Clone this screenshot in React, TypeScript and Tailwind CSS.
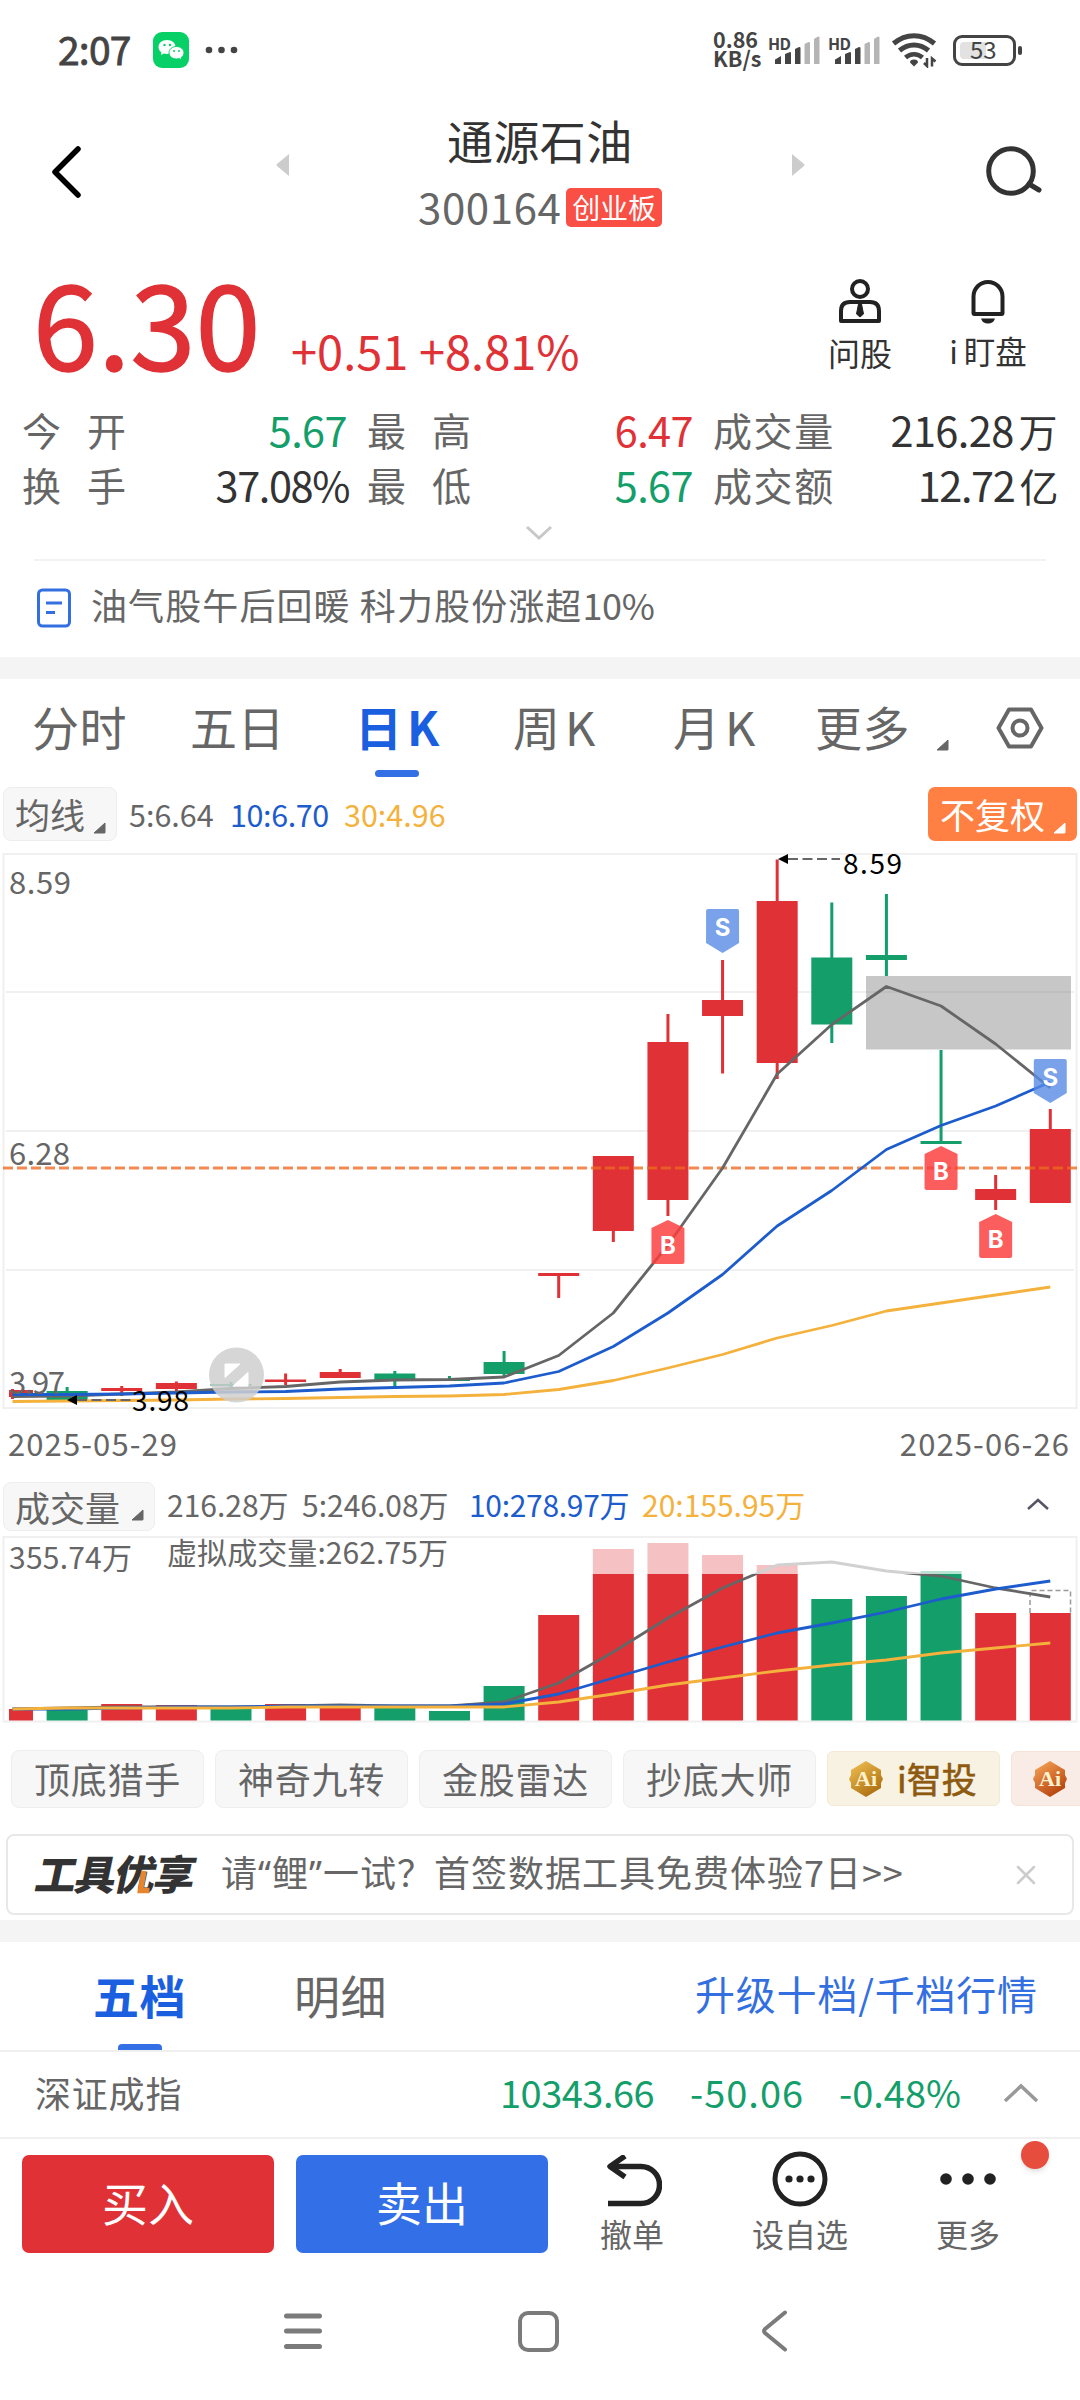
import { ReactNode } from 'react';
import clsx from 'clsx';

type Candle = {
  color: 'red' | 'green';
  high: number;
  top: number;
  bottom: number;
  low: number;
};

const COLORS = { red: '#df3136', green: '#139e6a' };
const SLOT = 54.62;
const BAR_WIDTH = 41;

const centerX = (index: number) => 12.5 + index * SLOT;

// y values are relative to the price pane
const CANDLES: Candle[] = [
  { color: 'red', high: 539, top: 540, bottom: 547, low: 549 },
  { color: 'green', high: 537, top: 541, bottom: 550, low: 550 },
  { color: 'red', high: 536, top: 538, bottom: 541, low: 546 },
  { color: 'red', high: 531.5, top: 533, bottom: 539, low: 541 },
  { color: 'green', high: 532, top: 534, bottom: 536, low: 538 },
  { color: 'red', high: 523.5, top: 529.5, bottom: 532, low: 535 },
  { color: 'red', high: 519, top: 522, bottom: 528, low: 528 },
  { color: 'green', high: 521, top: 523.5, bottom: 530, low: 536 },
  { color: 'green', high: 526, top: 529, bottom: 531, low: 531 },
  { color: 'green', high: 501, top: 512, bottom: 524, low: 526 },
  { color: 'red', high: 423, top: 423, bottom: 426, low: 448 },
  { color: 'red', high: 306, top: 306, bottom: 381, low: 392 },
  { color: 'red', high: 164, top: 192, bottom: 350, low: 366 },
  { color: 'red', high: 110, top: 150, bottom: 166, low: 223.5 },
  { color: 'red', high: 9.5, top: 51, bottom: 213, low: 229 },
  { color: 'green', high: 52.5, top: 107.5, bottom: 174.5, low: 193 },
  { color: 'green', high: 44, top: 105, bottom: 110, low: 126 },
  { color: 'green', high: 200, top: 291, bottom: 294, low: 294 },
  { color: 'red', high: 325, top: 339, bottom: 350, low: 360 },
  { color: 'red', high: 259, top: 279, bottom: 353, low: 353 },
];

const MA5 = [546.5, 546, 544, 542, 538.5, 536.5, 532, 530, 529.5, 527, 505.5, 463, 395, 318, 224, 174.5, 136.5, 156, 194, 238];
const MA10 = [544.5, 544.5, 544, 543, 542, 541.5, 539, 537.5, 536, 533, 521.5, 496.5, 463, 424.5, 376, 340.5, 299.5, 275.5, 256, 232];
const MA30 = [551.5, 551, 550.5, 550, 549, 548.5, 547.5, 546.5, 546, 544.5, 539.5, 530.5, 518, 504.5, 488, 475.5, 461, 453, 445, 437];

const VOLUMES: { top: number; color: 'red' | 'green' }[] = [
  { top: 173, color: 'red' },
  { top: 172, color: 'green' },
  { top: 168, color: 'red' },
  { top: 169, color: 'red' },
  { top: 172, color: 'green' },
  { top: 168, color: 'red' },
  { top: 172, color: 'red' },
  { top: 172, color: 'green' },
  { top: 175, color: 'green' },
  { top: 150, color: 'green' },
  { top: 79, color: 'red' },
  { top: 13, color: 'red' },
  { top: 7, color: 'red' },
  { top: 19, color: 'red' },
  { top: 29, color: 'red' },
  { top: 63, color: 'green' },
  { top: 60, color: 'green' },
  { top: 35, color: 'green' },
  { top: 77, color: 'red' },
  { top: 77, color: 'red' },
];
const VOL5 = [173, 172, 171, 171, 171, 170, 169, 170, 170, 166, 147, 116, 82, 52, 29, 26, 35, 40, 52, 61];
const VOL10 = [173, 173, 172, 171, 171, 170, 170, 170, 170, 168, 158, 142, 126, 111, 97, 87, 76, 63, 53, 45];
const VOL20 = [173, 172, 172, 172, 172, 171, 171, 171, 171, 171, 166, 158, 149, 142, 135, 129, 124, 117, 112, 107];

const toPoints = (values: number[]) => values.map((y, i) => `${centerX(i)},${y}`).join(' ');

const MaLines = ({ short, mid, long }: { short: number[]; mid: number[]; long: number[] }) => (
  <g fill="none" strokeWidth="2.8" strokeLinejoin="round">
    <polyline points={toPoints(short)} stroke="#666" />
    <polyline points={toPoints(mid)} stroke="#1d5ccc" />
    <polyline points={toPoints(long)} stroke="#f4b13c" />
  </g>
);

const TradeMark = ({ index, y, kind }: { index: number; y: number; kind: 'B' | 'S' }) => {
  const x = centerX(index);
  return (
    <g>
      {kind === 'S' ? (
        <path
          d={`M${x - 14.5} ${y}h29q2 0 2 2v32l-16.5 10l-16.5-10v-32q0-2 2-2z`}
          fill="#588be5"
          fillOpacity="0.8"
        />
      ) : (
        <path
          d={`M${x} ${y}l16.5 8v34q0 2-2 2h-29q-2 0-2-2v-34z`}
          fill="#fb3d3d"
          fillOpacity="0.83"
        />
      )}
      <text
        x={x}
        y={kind === 'S' ? y + 27 : y + 34}
        textAnchor="middle"
        fill="#fff"
        fontSize="24"
        fontWeight="700"
        className="font-['Inter',sans-serif]"
      >
        {kind}
      </text>
    </g>
  );
};

const Corner = ({ className }: { className?: string }) => (
  <svg viewBox="0 0 13 12" className={clsx('h-3 w-[13px] shrink-0', className)}>
    <path d="M12 1v9.500q0 .5-.5.5H1z" fill="currentColor" stroke="currentColor" />
  </svg>
);

const SignalBars = () => (
  <div className="relative h-8 w-[60px] shrink-0">
    <span className="absolute top-[-1px] left-[-1px] text-[16px] leading-5 font-bold tracking-[-0.5px]">HD</span>
    <svg viewBox="0 0 60 32" className="h-8 w-[60px]">
      <path d="M6 30v-4q0-1 1-1l5-3v8z" fill="#444" />
      <path d="M16 30v-10l5-2q1 0 1 1v11z" fill="#444" />
      <path d="M26 30V15l4-2q1.500 0 1.500 1v16z" fill="#444" />
      <path d="M35.500 30V10l4-2q1.500 0 1.500 1v21z" fill="#b5b5b5" />
      <path d="M45 30V5l4-2.500q1.500 0 1.500 1V30z" fill="#b5b5b5" />
    </svg>
  </div>
);

const StatusBar = () => (
  <div className="flex h-[100px] items-center pl-[58px] text-[#444]">
    <span className="-mt-[3px] w-[95px] text-[39px] leading-none tracking-[-0.8px] [-webkit-text-stroke:0.8px_#444]">2:07</span>
    <svg viewBox="0 0 36 36" className="h-9 w-9">
      <rect width="36" height="36" rx="9" fill="#07d067" />
      <path d="M14 8c-5 0-8.500 3.200-8.500 7 0 2.200 1 4 3 5.400L7.800 23l3-1.500c1 .3 2 .5 3.200.5 5 0 8.500-3 8.500-7s-3.500-7-8.500-7z" fill="#fff" />
      <path d="M23.500 14.500c-4.200 0-7.500 2.800-7.500 6.300s3.300 6.200 7.500 6.200c1 0 1.900-.1 2.700-.4l2.600 1.300-.7-2.300c1.800-1.200 2.900-2.900 2.900-4.800 0-3.500-3.300-6.300-7.500-6.300z" fill="#fff" stroke="#07d067" />
      <g fill="#07d067">
        <circle cx="11.500" cy="13" r="1.200" />
        <circle cx="17" cy="13" r="1.200" />
        <circle cx="21" cy="19" r="1" />
        <circle cx="26" cy="19" r="1" />
      </g>
    </svg>
    <svg viewBox="0 0 34 8" className="ml-4 h-2 w-[34px]" fill="#444">
      <circle cx="4" cy="4" r="3.300" />
      <circle cx="16.500" cy="4" r="3.300" />
      <circle cx="29" cy="4" r="3.300" />
    </svg>
    <div className="-mt-[3px] ml-[474px] w-[56px] text-[21.5px] leading-[18.5px] font-bold">
      <p>0.86</p>
      <p>KB/s</p>
    </div>
    <SignalBars />
    <SignalBars />
    <svg viewBox="0 0 48 36" className="ml-[2px] h-9 w-12" fill="none" stroke="#444" strokeWidth="5">
      <path d="M2.500 11.500C15 1 31 1 43.500 11.500" />
      <path d="M8.500 18.500c9-7.500 20-7.500 29 0" />
      <path d="M14.500 25.500c5-4.500 12-4.500 17 0" strokeWidth="4.500" />
      <path d="M23 34.500l-4-4q0-3 4-3t4 3z" fill="#444" stroke="none" />
      <path d="M36 26v8l-3-3M41 34.500v-8l3.500 3" strokeWidth="2.500" />
    </svg>
    <div className="ml-[14px] flex h-[31px] w-[63px] items-center rounded-[9px] border-[3px] border-[#444] p-1">
      <div className="flex h-full w-[26px] items-center rounded-l-[4px] bg-[#e2e2e2] pl-[10px]">
        <span className="-mt-0.5 text-[24px] leading-none">53</span>
      </div>
    </div>
    <div className="ml-[2px] h-[9px] w-1 rounded-full bg-[#444]" />
  </div>
);

const Header = () => (
  <div className="flex h-[144px] text-[#333]">
    <svg viewBox="0 0 32 56" className="mt-11 ml-[50px] h-14 w-8" fill="none" stroke="#000" strokeWidth="5.500" strokeLinecap="round" strokeLinejoin="round">
      <path d="M28 5L5 28l23 23" />
    </svg>
    <svg viewBox="0 0 13 22" className="mt-[54px] ml-[194px] h-[22px] w-[13px]">
      <path d="M13 0v22L1 12q-1-1 0-2z" fill="#ccc" />
    </svg>
    <div className="ml-[67px] w-[500px]">
      <div className="flex h-[88px] items-center pb-[6px] pl-[91px] text-[46px] leading-none tracking-[0.4px]">
        <span className="-mt-1">通源石油</span>
      </div>
      <div className="-mt-1 flex items-center pl-[62px]">
        <span className="-mt-[3px] w-[148px] text-[42px] leading-[50px] tracking-[0.6px] text-[#666]">300164</span>
        <span className="flex h-[39px] w-[96px] items-center justify-center rounded-[5px] bg-[#f94f44] pb-[2px] text-[28px] leading-none tracking-[-0.2px] text-white">
          创业板
        </span>
      </div>
    </div>
    <svg viewBox="0 0 13 22" className="mt-[54px] ml-[-64px] h-[22px] w-[13px]">
      <path d="M0 0v22L12 12q1-1 0-2z" fill="#ccc" />
    </svg>
    <svg viewBox="0 0 60 56" className="mt-11 ml-[178px] h-14 w-[60px]" fill="none" stroke="#333" strokeWidth="5" strokeLinecap="round">
      <circle cx="28" cy="27" r="22.300" />
      <path d="M46 40l10 6" />
    </svg>
  </div>
);

const PriceRow = () => (
  <div className="flex h-[161px] text-[#df3136]">
    <span className="mt-[17px] ml-[33px] w-[258px] text-[117px] leading-[117px] [-webkit-text-stroke:1.5px_#df3136]">6.30</span>
    <span className="mt-[76px] w-[538px] text-[47px] leading-[60px]">+0.51 +8.81%</span>
    <div className="mt-[34px] flex w-[62px] flex-col items-center text-[#222]">
      <svg viewBox="0 0 44 46" className="h-[46px] w-11" fill="none" stroke="#222" strokeWidth="4" strokeLinejoin="round">
        <circle cx="22" cy="11" r="8" />
        <path d="M3 43V33q0-9 9-9h20q9 0 9 9v10z" />
        <path d="M20.500 26h3l2 10-3.500 3-3.500-3z" fill="#222" strokeWidth="1" />
      </svg>
      <span className="mt-2 text-[32px] leading-[40px] whitespace-nowrap text-[#333]">问股</span>
    </div>
    <div className="mt-[34px] ml-[56px] flex w-[82px] flex-col items-center text-[#222]">
      <svg viewBox="0 0 36 46" className="h-[46px] w-9" fill="none" stroke="#222" strokeWidth="4">
        <path d="M3.500 35V18.500a14.500 14.500 0 0 1 29 0V35q0 1-1 1h-27q-1 0-1-1z" />
        <path d="M11 40.500h14q-1.500 5-7 5t-7-5z" fill="#222" stroke="none" />
      </svg>
      <span className="mt-1.5 text-[31.5px] leading-[40px] whitespace-nowrap text-[#333]">
        i<span className="ml-1.5">盯盘</span>
      </span>
    </div>
  </div>
);

type StatProps = {
  label: ReactNode;
  value: string;
  unit?: string;
  labelClass: string;
  valueClass: string;
};

const Stat = ({ label, value, unit, labelClass, valueClass }: StatProps) => (
  <>
    <span className={clsx('shrink-0 text-[39px] text-[#666]', labelClass)}>{label}</span>
    <span className={clsx('shrink-0 text-right text-[41.5px] tracking-[-0.6px]', valueClass)}>
      {value}
      {unit ? <span className="ml-[5px] text-[39px]">{unit}</span> : null}
    </span>
  </>
);

const StatsPanel = () => (
  <div className="h-[154px] pl-[22px] whitespace-nowrap">
    <div className="flex h-[55px] items-center pb-[6px] leading-none">
      <Stat label="今开" value="5.67" labelClass="w-[130px] tracking-[26px]" valueClass="w-[195px] text-[#139e6a]" />
      <Stat label="最高" value="6.47" labelClass="ml-5 w-[130px] tracking-[26px]" valueClass="w-[196px] text-[#df3136]" />
      <Stat label="成交量" value="216.28" unit="万" labelClass="ml-5 w-[130px] tracking-[1.6px]" valueClass="w-[214px] text-[#333]" />
    </div>
    <div className="flex h-[55px] items-center pb-[6px] leading-none">
      <Stat label="换手" value="37.08%" labelClass="w-[130px] tracking-[26px]" valueClass="w-[197px] tracking-[-1.4px] text-[#333]" />
      <Stat label="最低" value="5.67" labelClass="ml-[18px] w-[130px] tracking-[26px]" valueClass="w-[196px] text-[#139e6a]" />
      <Stat label="成交额" value="12.72" unit="亿" labelClass="ml-5 w-[130px] tracking-[1.6px]" valueClass="w-[214px] tracking-[-1.4px] text-[#333]" />
    </div>
    <svg viewBox="0 0 28 16" className="mt-2.5 ml-[503px] h-4 w-7" fill="none" stroke="#c8c8c8" strokeWidth="3">
      <path d="M2 2l12 11L26 2" />
    </svg>
  </div>
);

const NewsRow = () => (
  <div className="mx-[34px] flex h-[98px] items-center border-t-2 border-[#f2f2f2] pb-[6px]">
    <svg viewBox="0 0 36 42" className="mt-[3px] ml-[2px] h-[42px] w-9" fill="none" stroke="#336fe0" strokeWidth="3">
      <rect x="2.500" y="3" width="31" height="36" rx="4" />
      <path d="M10 16h16M10 25.500h9" />
    </svg>
    <span className="-mt-[5px] ml-[19px] text-[36px] leading-none tracking-[1.1px] whitespace-nowrap text-[#666]">
      油气股午后回暖 科力股份涨超<span className="tracking-[-0.4px]">10%</span>
    </span>
  </div>
);

const PERIODS = [
  { label: '分时', className: 'w-[158px] tracking-[0.5px]' },
  { label: '五日', className: 'w-[165px] tracking-[0.5px]' },
  { label: '日K', className: 'w-[158px] tracking-[5px] font-bold text-[#1a5fdf]', active: true },
  { label: '周K', className: 'w-[160px] tracking-[5px]' },
  { label: '月K', className: 'w-[142px] tracking-[5px]' },
  { label: '更多', className: 'w-[119px] tracking-[0.5px]' },
];

const PeriodTabs = () => (
  <div className="flex h-[105px] pl-[32px] text-[#666]">
    {PERIODS.map((period) => (
      <div key={period.label} className={clsx('relative shrink-0 pt-[17px] text-[47px] leading-[60px]', period.className)}>
        {period.label}
        {period.active ? <span className="absolute top-[91px] left-[20px] h-[7px] w-11 rounded-full bg-[#336fe5]" /> : null}
      </div>
    ))}
    <Corner className="mt-[60px] ml-[2px]" />
    <svg viewBox="0 0 48 44" className="mt-[27px] ml-[47px] h-11 w-12" fill="none" stroke="#666" strokeWidth="4" strokeLinejoin="round">
      <path d="M13 3.500h22L45.500 22 35 40.500H13L2.500 22z" />
      <circle cx="24" cy="22" r="7.500" />
    </svg>
  </div>
);

const PriceChart = () => (
  <div>
    <div className="flex h-[66px] items-start pt-[3px] pl-[3px] text-[30.5px] leading-[54px] whitespace-nowrap">
      <div className="flex h-[54px] w-[114px] items-center rounded-lg border border-[#eee] bg-[#f7f7f7] pl-[11px] text-[35px] text-[#666]">
        均线
        <Corner className="mt-7 ml-2" />
      </div>
      <span className="ml-[12px] w-[101px] text-[#666]">5:6.64</span>
      <span className="w-[114px] tracking-[-0.4px] text-[#1d5ccc]">10:6.70</span>
      <span className="w-[584px] text-[#f4b13c]">30:4.96</span>
      <div className="flex h-[54px] w-[149px] items-center rounded-[7px] bg-[#ff8042] pl-[12px] text-[35px] text-white">
        不复权
        <Corner className="mt-7 ml-2" />
      </div>
    </div>
    <svg viewBox="0 0 1080 570" className="block h-[570px] w-[1080px] overflow-visible">
      <rect x="3.500" y="4" width="1073" height="554" fill="none" stroke="#f0f0f0" strokeWidth="2" />
      <path d="M6 142h1068M6 281h1068M6 420h1068" stroke="#ebebeb" strokeWidth="1.500" />
      <rect x="866" y="126" width="205" height="73.500" fill="#c7c7c7" />
      <path d="M866 142h205" stroke="#bdbdbd" strokeWidth="1.500" />
      {CANDLES.map((candle, i) => {
        const left = Math.max(centerX(i) - BAR_WIDTH / 2, 9);
        return (
          <g key={i} fill={COLORS[candle.color]}>
            <rect x={centerX(i) - 1.500} y={candle.high} width="3" height={candle.low - candle.high} />
            <rect x={left} y={candle.top} width={centerX(i) + BAR_WIDTH / 2 - left} height={candle.bottom - candle.top} />
          </g>
        );
      })}
      <path d="M3 318h1074" stroke="#ee6a20" strokeOpacity="0.78" strokeWidth="3" strokeDasharray="10 4" />
      <MaLines short={MA5} mid={MA10} long={MA30} />
      <TradeMark index={12} y={370} kind="B" />
      <TradeMark index={13} y={59} kind="S" />
      <TradeMark index={17} y={296} kind="B" />
      <TradeMark index={18} y={364} kind="B" />
      <TradeMark index={19} y={209} kind="S" />
      <g fontSize="31" fill="#666">
        <text x="9" y="44" textLength="62">8.59</text>
        <text x="9" y="315" textLength="61">6.28</text>
        <text x="9" y="544" textLength="56">3.97</text>
      </g>
      <g stroke="#666" strokeWidth="2">
        <path d="M788 9h52" strokeDasharray="10 4.500" />
        <path d="M77 550h54" strokeDasharray="10 4.500" />
      </g>
      <path d="M778 9l10-5v10zM67 550l10-5v10z" fill="#000" />
      <g fontSize="28" fill="#000">
        <text x="843" y="24" textLength="59">8.59</text>
        <text x="132" y="561" textLength="57">3.98</text>
      </g>
      <circle cx="236.500" cy="525" r="27.500" fill="#cfcfcf" fillOpacity="0.85" />
      <path d="M225 514h15l-15 13.500zM248 536h-15l15-13.500z" fill="#fff" stroke="#fff" strokeLinejoin="round" />
    </svg>
    <div className="flex h-[62px] justify-between pr-[10px] pl-[8px] text-[31px] leading-[45px] tracking-[1.1px] text-[#666]">
      <span>2025-05-29</span>
      <span>2025-06-26</span>
    </div>
  </div>
);

const VolumeChart = () => (
  <div>
    <div className="flex h-[54px] items-start pl-[3px] text-[30px] leading-[44px] whitespace-nowrap">
      <div className="flex h-[49px] w-[152px] items-center rounded-lg border border-[#eee] bg-[#f7f7f7] pl-[11px] text-[35px] text-[#666]">
        成交量
        <Corner className="mt-4 ml-[11px]" />
      </div>
      <span className="ml-[12px] w-[135px] text-[#666]">216.28万</span>
      <span className="w-[167px] text-[#666]">5:246.08万</span>
      <span className="w-[173px] tracking-[-0.3px] text-[#1d5ccc]">10:278.97万</span>
      <span className="w-[384px] text-[#f4b13c]">20:155.95万</span>
      <svg viewBox="0 0 24 14" className="mt-[15px] h-3.500 w-6" fill="none" stroke="#556" strokeWidth="2.500">
        <path d="M2 12L12 3l10 9" />
      </svg>
    </div>
    <svg viewBox="0 0 1080 188" className="block h-[188px] w-[1080px] overflow-visible">
      <rect x="3.500" y="1" width="1073" height="184.500" fill="none" stroke="#f0f0f0" strokeWidth="2" />
      {VOLUMES.map((bar, i) => {
        const left = Math.max(centerX(i) - BAR_WIDTH / 2, 9);
        return (
          <rect
            key={i}
            x={left}
            y={bar.top}
            width={centerX(i) + BAR_WIDTH / 2 - left}
            height={184.500 - bar.top}
            fill={COLORS[bar.color]}
          />
        );
      })}
      <path d="M1030 77V54.500h40.500V77" fill="none" stroke="#999" strokeWidth="1.500" strokeDasharray="5 3" />
      <MaLines short={VOL5} mid={VOL10} long={VOL20} />
      <rect x="500" y="2.500" width="510" height="35.500" fill="#fff" fillOpacity="0.7" />
      <g fontSize="30" fill="#666">
        <text x="9" y="33" textLength="123">355.74万</text>
        <text x="167" y="28" textLength="281">虚拟成交量:262.75万</text>
      </g>
    </svg>
  </div>
);

const AiBadge = ({ id, from, to }: { id: string; from: string; to: string }) => (
  <svg viewBox="0 0 36 38" className="h-[38px] w-9 shrink-0">
    <defs>
      <linearGradient id={id} x1="0.2" y1="0.1" x2="0.8" y2="1">
        <stop offset="0" stopColor={from} />
        <stop offset="1" stopColor={to} />
      </linearGradient>
    </defs>
    <path d="M18 1l15 9v5l2 4-2 4v5l-15 9-15-9v-5l-2-4 2-4v-5z" fill={`url(#${id})`} />
    <text x="18" y="26" textAnchor="middle" fontSize="22" fontWeight="700" fill="#fff3cf" className="font-['Liberation_Serif',serif]">
      Ai
    </text>
  </svg>
);

const ToolChips = () => (
  <div className="flex h-[110px] gap-[11px] overflow-hidden pt-[26px] pl-[11px] whitespace-nowrap">
    {['顶底猎手', '神奇九转', '金股雷达', '抄底大师'].map((name) => (
      <span
        key={name}
        className="flex h-[58px] w-[193px] shrink-0 items-center justify-center rounded-lg border border-[#eee] bg-[#f7f7f7] pb-[3px] text-[36px] leading-none tracking-[0.8px] text-[#666]"
      >
        {name}
      </span>
    ))}
    <span className="mt-px flex h-[55px] w-[173px] shrink-0 items-center rounded-md border border-[#f5e8d4] bg-[#f8f2e3] pl-5 text-[35px] leading-none text-[#8d5a10]">
      <AiBadge id="badgeGold" from="#e8b64a" to="#a8690c" />
      <span className="-mt-[3px] ml-[13px] [-webkit-text-stroke:0.6px_#8d5a10]">i智投</span>
    </span>
    <span className="mt-px flex h-[55px] w-[173px] shrink-0 items-center rounded-md border border-[#f7e2da] bg-[#f9ece6] pl-5">
      <AiBadge id="badgeCopper" from="#f09a50" to="#b03a08" />
    </span>
  </div>
);

const PromoBanner = () => (
  <div className="mx-[6px] flex h-[81px] items-center rounded-lg border-2 border-[#e8e8e8] bg-white whitespace-nowrap">
    <div className="relative ml-[29px] w-[184px]">
      <span className="-mt-[5px] block -skew-x-12 text-[41px] leading-[44px] font-black tracking-[-1.500px] text-[#333]">工具优享</span>
      <svg viewBox="0 0 14 24" className="absolute top-[15px] left-[99px] h-6 w-3.500" fill="none" stroke="#e5852f" strokeWidth="5.500">
        <path d="M8 1L4.500 20.500h9" />
      </svg>
    </div>
    <span className="-mt-[5px] text-[36px] leading-none tracking-[1px] text-[#666]">
      请<span className="font-['Noto_Sans',sans-serif]">“</span>鲤<span className="font-['Noto_Sans',sans-serif]">”</span>
      一试？首签数据工具免费体验7日&gt;&gt;
    </span>
    <svg viewBox="0 0 20 20" className="mr-[36px] ml-auto h-5 w-5" stroke="#ccc" strokeWidth="2.500" strokeLinecap="round">
      <path d="M2 2l16 16M18 2L2 18" />
    </svg>
  </div>
);

const OrderBook = () => (
  <div className="whitespace-nowrap">
    <div className="flex h-[110px] border-b-2 border-[#f0f0f0] text-[46px] leading-[60px] tracking-[0.6px]">
      <div className="relative ml-[93px] w-[201px] pt-[22px] font-bold text-[#1a5fdf]">
        五档
        <span className="absolute bottom-0 left-[25px] h-[6px] w-11 rounded-t-[4px] bg-[#336fe5]" />
      </div>
      <span className="w-[401px] pt-[22px] text-[#666]">明细</span>
      <span className="pt-[22px] text-[40px] leading-[58px] tracking-[0.8px] text-[#336fe0]">升级十档/千档行情</span>
    </div>
    <div className="flex h-[87px] items-center border-b-2 border-[#f0f0f0] text-[38px] leading-none text-[#139e6a]">
      <span className="-mt-[5px] ml-[35px] w-[465px] text-[36px] tracking-[0.8px] text-[#666]">深证成指</span>
      <span className="-mt-[5px] w-[190px] tracking-[-0.5px]">10343.66</span>
      <span className="-mt-[5px] w-[149px] tracking-[1px]">-50.06</span>
      <span className="-mt-[5px] w-[164px]">-0.48%</span>
      <svg viewBox="0 0 36 20" className="-mt-1 h-5 w-9" fill="none" stroke="#999" strokeWidth="3.500">
        <path d="M2 18L18 3l16 15" />
      </svg>
    </div>
  </div>
);

const ActionBar = () => (
  <div className="flex h-[143px] items-start pt-[16px] pl-[22px] text-[32px] leading-[40px] whitespace-nowrap text-[#666]">
    <button className="h-[98px] w-[252px] rounded-[7px] bg-[#df3136] pb-[7px] text-[46px] text-white">买入</button>
    <button className="ml-[22px] h-[98px] w-[252px] rounded-[7px] bg-[#336fe6] pb-[7px] text-[46px] text-white">卖出</button>
    <div className="ml-[52px] flex w-[64px] flex-col items-center">
      <svg viewBox="0 0 56 52" className="ml-1 h-[52px] w-14" fill="none" stroke="#222" strokeWidth="5.500" strokeLinejoin="round">
        <path d="M19 1L4 11.500 19 22" />
        <path d="M4 11.500h31a18.500 18.500 0 0 1 0 37H2" />
      </svg>
      <span className="mt-1.5">撤单</span>
    </div>
    <div className="ml-[87px] flex w-[98px] flex-col items-center">
      <svg viewBox="0 0 56 56" className="-mt-1 h-14 w-14" fill="#222">
        <circle cx="28" cy="28" r="25" fill="none" stroke="#222" strokeWidth="5" />
        <circle cx="17" cy="28" r="3.600" />
        <circle cx="28" cy="28" r="3.600" />
        <circle cx="39" cy="28" r="3.600" />
      </svg>
      <span className="mt-1.5">设自选</span>
    </div>
    <div className="relative ml-[87px] flex w-[64px] flex-col items-center">
      <svg viewBox="0 0 60 52" className="h-[52px] w-[60px]" fill="#222">
        <circle cx="8" cy="24" r="5.800" />
        <circle cx="30" cy="24" r="5.800" />
        <circle cx="52" cy="24" r="5.800" />
      </svg>
      <span className="mt-1.5">更多</span>
      <span className="absolute top-[-14px] left-[85px] h-7 w-7 rounded-full bg-[#e64d3d] shadow-md" />
    </div>
  </div>
);

const SystemNav = () => (
  <div className="flex h-[119px] items-center pb-[22px] pl-[283px]">
    <svg viewBox="0 0 40 40" className="h-10 w-10" stroke="#7b7b7b" strokeWidth="5" strokeLinecap="round">
      <path d="M3.500 5h33M3.500 20h33M3.500 35.500h33" />
    </svg>
    <svg viewBox="0 0 42 42" className="ml-[194px] h-[42px] w-[42px]" fill="none" stroke="#7b7b7b" strokeWidth="4">
      <rect x="3" y="3" width="37" height="37" rx="8" />
    </svg>
    <svg viewBox="0 0 28 42" className="ml-[201px] h-[42px] w-7" fill="none" stroke="#7b7b7b" strokeWidth="4" strokeLinecap="round" strokeLinejoin="round">
      <path d="M25 2.500L5 19q-2 2 0 4l20 16.500" />
    </svg>
  </div>
);

const App = () => (
  <div className="h-[2400px] w-[1080px] overflow-hidden bg-white font-['Noto_Sans_CJK_SC',sans-serif]">
    <StatusBar />
    <Header />
    <PriceRow />
    <StatsPanel />
    <NewsRow />
    <div className="h-[22px] bg-[#f4f4f4]" />
    <PeriodTabs />
    <PriceChart />
    <VolumeChart />
    <ToolChips />
    <PromoBanner />
    <div className="mt-[5px] h-[22px] bg-[#f4f4f4]" />
    <OrderBook />
    <ActionBar />
    <SystemNav />
  </div>
);

export default App;
